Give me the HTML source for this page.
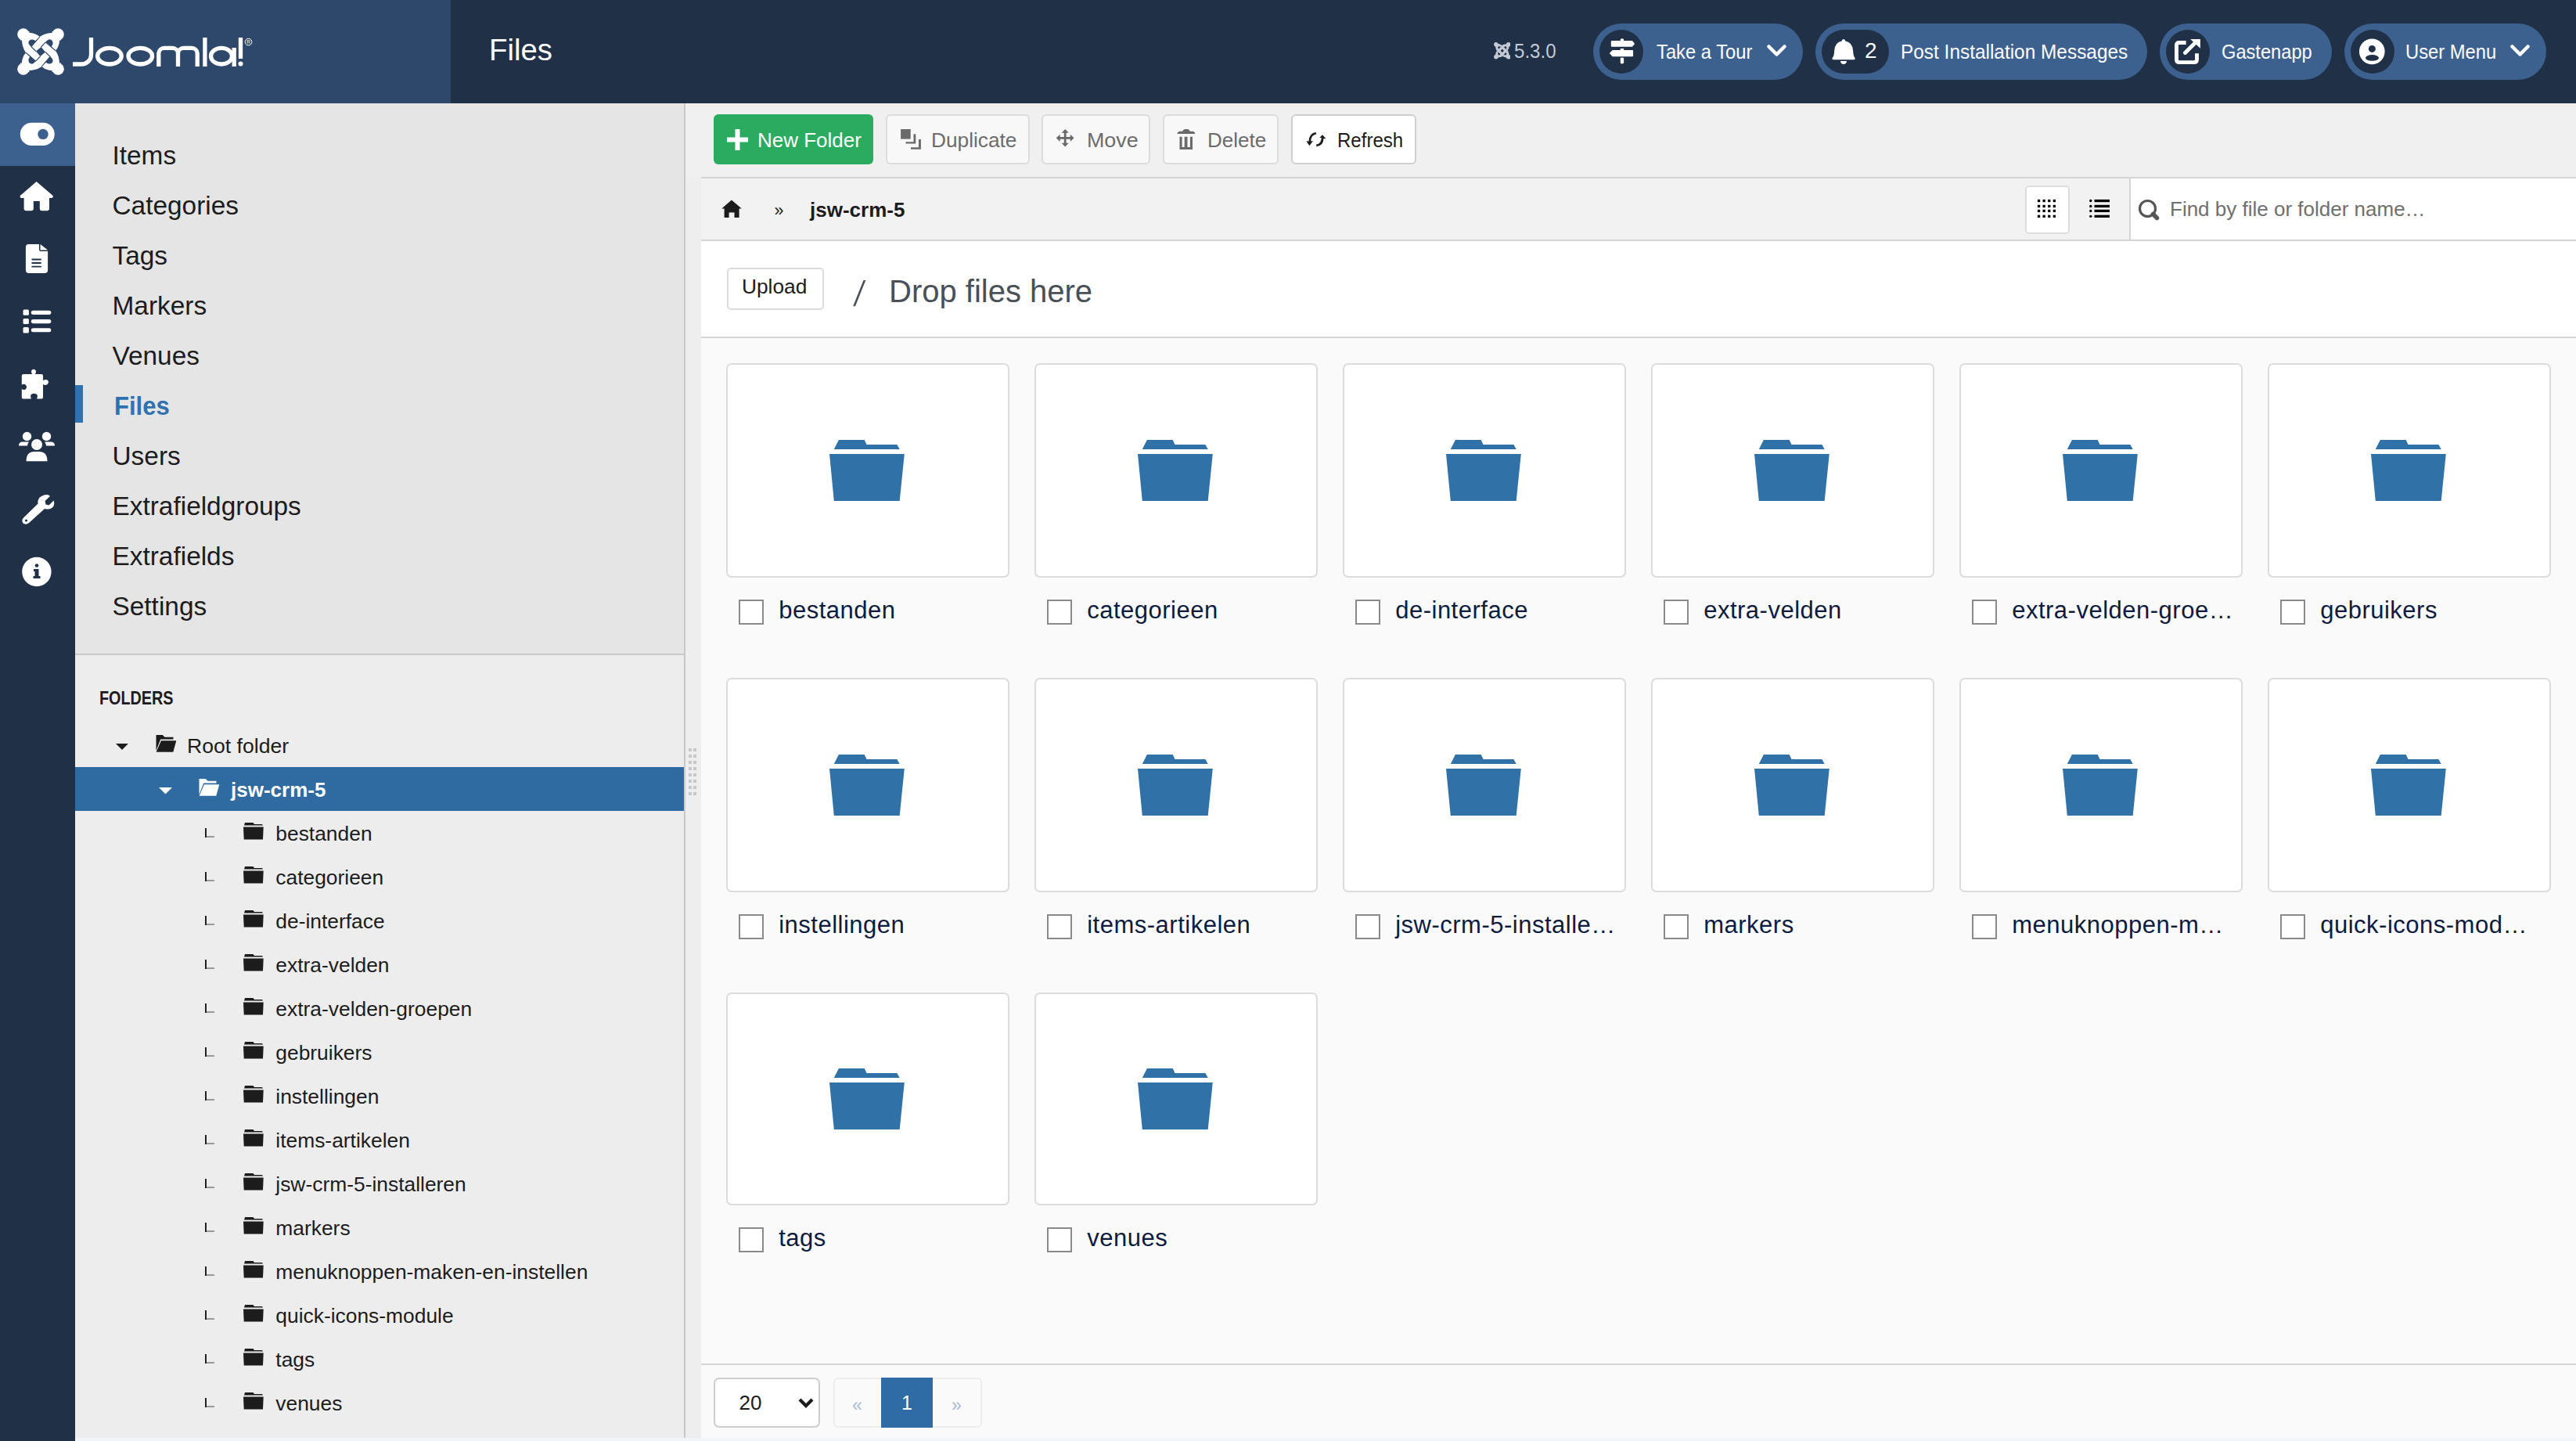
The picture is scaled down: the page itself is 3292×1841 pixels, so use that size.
<!DOCTYPE html><html><head><meta charset="utf-8"><style>
html,body{margin:0;padding:0;width:3292px;height:1841px;overflow:hidden;background:#f0f4fb;font-family:"Liberation Sans", sans-serif;}
.t{position:absolute;white-space:nowrap;}
.b{position:absolute;box-sizing:border-box;}
</style></head><body>
<div class="b" style="left:0.0px;top:0.0px;width:3292.0px;height:132.0px;background:#1f3047"></div>
<div class="b" style="left:0.0px;top:0.0px;width:576.0px;height:132.0px;background:#2e486b"></div>
<div class="b" style="left:0.0px;top:132.0px;width:96.0px;height:1709.0px;background:#1f3047"></div>
<div class="b" style="left:0.0px;top:132.0px;width:96.0px;height:80.0px;background:#3d618f"></div>
<div class="b" style="left:96.0px;top:132.0px;width:778.0px;height:703.0px;background:#e5e5e5"></div>
<div class="b" style="left:96.0px;top:835.0px;width:778.0px;height:2.0px;background:#c8c8c8"></div>
<div class="b" style="left:96.0px;top:837.0px;width:778.0px;height:1000.0px;background:#ededed"></div>
<div class="b" style="left:874.0px;top:132.0px;width:2.0px;height:1705.0px;background:#c8c8c8"></div>
<div class="b" style="left:876.0px;top:132.0px;width:2416.0px;height:1705.0px;background:#eeeeee"></div>
<div class="b" style="left:876.0px;top:132.0px;width:2416.0px;height:94.0px;background:#f0f0f0"></div>
<div class="b" style="left:896.0px;top:226.0px;width:2396.0px;height:82.0px;background:#f2f2f2;border-top:2px solid #d4d4d4;border-bottom:2px solid #d4d4d4"></div>
<div class="b" style="left:896.0px;top:308.0px;width:2396.0px;height:124.0px;background:#fff;border-bottom:2px solid #d4d4d4"></div>
<div class="b" style="left:896.0px;top:432.0px;width:2396.0px;height:1405.0px;background:#fafafa"></div>
<div class="b" style="left:896.0px;top:1742.0px;width:2396.0px;height:2.0px;background:#d4d4d4"></div>
<div class="t" style="left:625.0px;top:45.4px;font-size:38.3px;line-height:38.3px;color:#fff;">Files</div>
<div class="b" style="left:2036.0px;top:30.0px;width:268.0px;height:72.0px;background:#3d618f;border-radius:36px"></div>
<div class="b" style="left:2320.0px;top:30.0px;width:424.0px;height:72.0px;background:#3d618f;border-radius:36px"></div>
<div class="b" style="left:2760.0px;top:30.0px;width:220.0px;height:72.0px;background:#3d618f;border-radius:36px"></div>
<div class="b" style="left:2996.0px;top:30.0px;width:258.0px;height:72.0px;background:#3d618f;border-radius:36px"></div>
<div class="b" style="left:2044.0px;top:38.0px;width:56.0px;height:56.0px;background:#1f3047;border-radius:28px"></div>
<div class="b" style="left:2328.0px;top:38.0px;width:86.0px;height:56.0px;background:#1f3047;border-radius:28px"></div>
<div class="b" style="left:2768.0px;top:38.0px;width:56.0px;height:56.0px;background:#1f3047;border-radius:28px"></div>
<div class="b" style="left:3004.0px;top:38.0px;width:56.0px;height:56.0px;background:#1f3047;border-radius:28px"></div>
<div class="t" style="left:2117.0px;top:53.5px;font-size:25px;line-height:25px;color:#fff;transform:scaleX(0.95);transform-origin:0 0;">Take a Tour</div>
<div class="t" style="left:2429.0px;top:53.5px;font-size:25px;line-height:25px;color:#fff;transform:scaleX(0.976);transform-origin:0 0;">Post Installation Messages</div>
<div class="t" style="left:2839.0px;top:53.5px;font-size:25px;line-height:25px;color:#fff;transform:scaleX(0.946);transform-origin:0 0;">Gastenapp</div>
<div class="t" style="left:3074.0px;top:53.5px;font-size:25px;line-height:25px;color:#fff;transform:scaleX(0.95);transform-origin:0 0;">User Menu</div>
<div class="t" style="left:2383.0px;top:50.5px;font-size:28px;line-height:28px;color:#fff;">2</div>
<div class="t" style="left:1935.0px;top:52.8px;font-size:25px;line-height:25px;color:#c4cad3;transform:scaleX(0.963);transform-origin:0 0;">5.3.0</div>
<div class="t" style="left:143.5px;top:181.6px;font-size:33.4px;line-height:33.4px;color:#1c1c1c;">Items</div>
<div class="t" style="left:143.5px;top:245.6px;font-size:33.4px;line-height:33.4px;color:#1c1c1c;">Categories</div>
<div class="t" style="left:143.5px;top:309.6px;font-size:33.4px;line-height:33.4px;color:#1c1c1c;">Tags</div>
<div class="t" style="left:143.5px;top:373.6px;font-size:33.4px;line-height:33.4px;color:#1c1c1c;">Markers</div>
<div class="t" style="left:143.5px;top:437.6px;font-size:33.4px;line-height:33.4px;color:#1c1c1c;">Venues</div>
<div class="t" style="left:145.5px;top:501.9px;font-size:33px;line-height:33px;color:#3071b0;font-weight:bold;transform:scaleX(0.94);transform-origin:0 0;">Files</div>
<div class="t" style="left:143.5px;top:565.6px;font-size:33.4px;line-height:33.4px;color:#1c1c1c;">Users</div>
<div class="t" style="left:143.5px;top:629.6px;font-size:33.4px;line-height:33.4px;color:#1c1c1c;">Extrafieldgroups</div>
<div class="t" style="left:143.5px;top:693.6px;font-size:33.4px;line-height:33.4px;color:#1c1c1c;">Extrafields</div>
<div class="t" style="left:143.5px;top:757.6px;font-size:33.4px;line-height:33.4px;color:#1c1c1c;">Settings</div>
<div class="b" style="left:96.0px;top:492.0px;width:10.0px;height:48.0px;background:#3071b0"></div>
<div class="t" style="left:127.0px;top:881.0px;font-size:23px;line-height:23px;color:#1c1c1c;font-weight:bold;transform:scaleX(0.86);transform-origin:0 0;">FOLDERS</div>
<div class="t" style="left:239.0px;top:940.4px;font-size:26.6px;line-height:26.6px;color:#1c1c1c;">Root folder</div>
<div class="b" style="left:96.0px;top:980.0px;width:778.0px;height:56.0px;background:#2f6ba0"></div>
<div class="t" style="left:295.0px;top:996.4px;font-size:26px;line-height:26px;color:#fff;font-weight:bold;">jsw-crm-5</div>
<div class="t" style="left:352.3px;top:1051.6px;font-size:26.4px;line-height:26.4px;color:#1c1c1c;">bestanden</div>
<div class="t" style="left:352.3px;top:1107.6px;font-size:26.4px;line-height:26.4px;color:#1c1c1c;">categorieen</div>
<div class="t" style="left:352.3px;top:1163.6px;font-size:26.4px;line-height:26.4px;color:#1c1c1c;">de-interface</div>
<div class="t" style="left:352.3px;top:1219.6px;font-size:26.4px;line-height:26.4px;color:#1c1c1c;">extra-velden</div>
<div class="t" style="left:352.3px;top:1275.6px;font-size:26.4px;line-height:26.4px;color:#1c1c1c;">extra-velden-groepen</div>
<div class="t" style="left:352.3px;top:1331.6px;font-size:26.4px;line-height:26.4px;color:#1c1c1c;">gebruikers</div>
<div class="t" style="left:352.3px;top:1387.6px;font-size:26.4px;line-height:26.4px;color:#1c1c1c;">instellingen</div>
<div class="t" style="left:352.3px;top:1443.6px;font-size:26.4px;line-height:26.4px;color:#1c1c1c;">items-artikelen</div>
<div class="t" style="left:352.3px;top:1499.6px;font-size:26.4px;line-height:26.4px;color:#1c1c1c;">jsw-crm-5-installeren</div>
<div class="t" style="left:352.3px;top:1555.6px;font-size:26.4px;line-height:26.4px;color:#1c1c1c;">markers</div>
<div class="t" style="left:352.3px;top:1611.6px;font-size:26.4px;line-height:26.4px;color:#1c1c1c;">menuknoppen-maken-en-instellen</div>
<div class="t" style="left:352.3px;top:1667.6px;font-size:26.4px;line-height:26.4px;color:#1c1c1c;">quick-icons-module</div>
<div class="t" style="left:352.3px;top:1723.6px;font-size:26.4px;line-height:26.4px;color:#1c1c1c;">tags</div>
<div class="t" style="left:352.3px;top:1779.6px;font-size:26.4px;line-height:26.4px;color:#1c1c1c;">venues</div>
<div class="b" style="left:912.0px;top:146.0px;width:204.0px;height:64.0px;background:#2bab60;border-radius:6px"></div>
<div class="t" style="left:968.0px;top:165.9px;font-size:26px;line-height:26px;color:#fff;">New Folder</div>
<div class="b" style="left:1132.0px;top:146.0px;width:184.0px;height:64.0px;background:#f8f8f8;border:2px solid #dcdcdc;border-radius:6px"></div>
<div class="b" style="left:1331.0px;top:146.0px;width:139.0px;height:64.0px;background:#f8f8f8;border:2px solid #dcdcdc;border-radius:6px"></div>
<div class="b" style="left:1486.0px;top:146.0px;width:148.0px;height:64.0px;background:#f8f8f8;border:2px solid #dcdcdc;border-radius:6px"></div>
<div class="b" style="left:1650.0px;top:146.0px;width:160.0px;height:64.0px;background:#fff;border:2px solid #cfcfcf;border-radius:6px"></div>
<div class="t" style="left:1190.0px;top:165.9px;font-size:26px;line-height:26px;color:#6c6c6c;transform:scaleX(1.01);transform-origin:0 0;">Duplicate</div>
<div class="t" style="left:1389.0px;top:165.9px;font-size:26px;line-height:26px;color:#6c6c6c;transform:scaleX(1.033);transform-origin:0 0;">Move</div>
<div class="t" style="left:1543.0px;top:165.9px;font-size:26px;line-height:26px;color:#6c6c6c;">Delete</div>
<div class="t" style="left:1709.0px;top:165.9px;font-size:26px;line-height:26px;color:#1c1c1c;transform:scaleX(0.925);transform-origin:0 0;">Refresh</div>
<div class="t" style="left:989.5px;top:258.5px;font-size:21.5px;line-height:21.5px;color:#1c1c1c;">»</div>
<div class="t" style="left:1035.0px;top:255.4px;font-size:26px;line-height:26px;color:#1c1c1c;font-weight:bold;">jsw-crm-5</div>
<div class="b" style="left:2588.0px;top:237.0px;width:57.0px;height:62.0px;background:#fff;border:2px solid #dcdcdc;border-radius:5px"></div>
<div class="b" style="left:2721.0px;top:228.0px;width:571.0px;height:78.0px;background:#fff;border-left:2px solid #d4d4d4"></div>
<div class="t" style="left:2773.0px;top:253.9px;font-size:26px;line-height:26px;color:#6f6f6f;">Find by file or folder name…</div>
<div class="b" style="left:929.0px;top:342.0px;width:124.0px;height:54.0px;background:#fff;border:2px solid #dcdcdc;border-radius:5px"></div>
<div class="t" style="left:948.0px;top:353.1px;font-size:26.3px;line-height:26.3px;color:#1c1c1c;">Upload</div>
<svg class="b" style="left:1088.0px;top:356.0px;" width="20" height="37" viewBox="1088 356 20 37"><path d="M1103.5 358 L1106.3 358 L1093 391.3 L1090.2 391.3Z" fill="#495057"/></svg>
<div class="t" style="left:1136.0px;top:352.0px;font-size:40px;line-height:40px;color:#495057;">Drop files here</div>
<div class="b" style="left:928.1px;top:464.2px;width:362.0px;height:273.6px;background:#fff;border:2px solid #dcdcdc;border-radius:7px"></div>
<svg class="b" style="left:1060.0px;top:561.6px;" width="96" height="78" viewBox="0 0 96 78"><path d="M11.9 0H44.7L47.5 6.1H86.4L89.7 11.9H5.8Z M0 18H95.8L89.7 78H5.8Z" fill="#3071a8"/></svg>
<div class="b" style="left:944.2px;top:766.2px;width:31.6px;height:31.6px;background:#fff;border:2px solid #8a8a8a"></div>
<div class="t" style="left:995.2px;top:763.5px;font-size:31px;line-height:31px;color:#0d1b3e;letter-spacing:0.5px;">bestanden</div>
<div class="b" style="left:1322.1px;top:464.2px;width:362.0px;height:273.6px;background:#fff;border:2px solid #dcdcdc;border-radius:7px"></div>
<svg class="b" style="left:1454.0px;top:561.6px;" width="96" height="78" viewBox="0 0 96 78"><path d="M11.9 0H44.7L47.5 6.1H86.4L89.7 11.9H5.8Z M0 18H95.8L89.7 78H5.8Z" fill="#3071a8"/></svg>
<div class="b" style="left:1338.2px;top:766.2px;width:31.6px;height:31.6px;background:#fff;border:2px solid #8a8a8a"></div>
<div class="t" style="left:1389.2px;top:763.5px;font-size:31px;line-height:31px;color:#0d1b3e;letter-spacing:0.5px;">categorieen</div>
<div class="b" style="left:1716.1px;top:464.2px;width:362.0px;height:273.6px;background:#fff;border:2px solid #dcdcdc;border-radius:7px"></div>
<svg class="b" style="left:1848.0px;top:561.6px;" width="96" height="78" viewBox="0 0 96 78"><path d="M11.9 0H44.7L47.5 6.1H86.4L89.7 11.9H5.8Z M0 18H95.8L89.7 78H5.8Z" fill="#3071a8"/></svg>
<div class="b" style="left:1732.2px;top:766.2px;width:31.6px;height:31.6px;background:#fff;border:2px solid #8a8a8a"></div>
<div class="t" style="left:1783.2px;top:763.5px;font-size:31px;line-height:31px;color:#0d1b3e;letter-spacing:0.5px;">de-interface</div>
<div class="b" style="left:2110.1px;top:464.2px;width:362.0px;height:273.6px;background:#fff;border:2px solid #dcdcdc;border-radius:7px"></div>
<svg class="b" style="left:2242.0px;top:561.6px;" width="96" height="78" viewBox="0 0 96 78"><path d="M11.9 0H44.7L47.5 6.1H86.4L89.7 11.9H5.8Z M0 18H95.8L89.7 78H5.8Z" fill="#3071a8"/></svg>
<div class="b" style="left:2126.2px;top:766.2px;width:31.6px;height:31.6px;background:#fff;border:2px solid #8a8a8a"></div>
<div class="t" style="left:2177.2px;top:763.5px;font-size:31px;line-height:31px;color:#0d1b3e;letter-spacing:0.5px;">extra-velden</div>
<div class="b" style="left:2504.1px;top:464.2px;width:362.0px;height:273.6px;background:#fff;border:2px solid #dcdcdc;border-radius:7px"></div>
<svg class="b" style="left:2636.0px;top:561.6px;" width="96" height="78" viewBox="0 0 96 78"><path d="M11.9 0H44.7L47.5 6.1H86.4L89.7 11.9H5.8Z M0 18H95.8L89.7 78H5.8Z" fill="#3071a8"/></svg>
<div class="b" style="left:2520.2px;top:766.2px;width:31.6px;height:31.6px;background:#fff;border:2px solid #8a8a8a"></div>
<div class="t" style="left:2571.2px;top:763.5px;font-size:31px;line-height:31px;color:#0d1b3e;letter-spacing:0.5px;">extra-velden-groe…</div>
<div class="b" style="left:2898.1px;top:464.2px;width:362.0px;height:273.6px;background:#fff;border:2px solid #dcdcdc;border-radius:7px"></div>
<svg class="b" style="left:3030.0px;top:561.6px;" width="96" height="78" viewBox="0 0 96 78"><path d="M11.9 0H44.7L47.5 6.1H86.4L89.7 11.9H5.8Z M0 18H95.8L89.7 78H5.8Z" fill="#3071a8"/></svg>
<div class="b" style="left:2914.2px;top:766.2px;width:31.6px;height:31.6px;background:#fff;border:2px solid #8a8a8a"></div>
<div class="t" style="left:2965.2px;top:763.5px;font-size:31px;line-height:31px;color:#0d1b3e;letter-spacing:0.5px;">gebruikers</div>
<div class="b" style="left:928.1px;top:865.9px;width:362.0px;height:274.0px;background:#fff;border:2px solid #dcdcdc;border-radius:7px"></div>
<svg class="b" style="left:1060.0px;top:963.5px;" width="96" height="78" viewBox="0 0 96 78"><path d="M11.9 0H44.7L47.5 6.1H86.4L89.7 11.9H5.8Z M0 18H95.8L89.7 78H5.8Z" fill="#3071a8"/></svg>
<div class="b" style="left:944.2px;top:1168.1px;width:31.6px;height:31.6px;background:#fff;border:2px solid #8a8a8a"></div>
<div class="t" style="left:995.2px;top:1165.6px;font-size:31px;line-height:31px;color:#0d1b3e;letter-spacing:0.5px;">instellingen</div>
<div class="b" style="left:1322.1px;top:865.9px;width:362.0px;height:274.0px;background:#fff;border:2px solid #dcdcdc;border-radius:7px"></div>
<svg class="b" style="left:1454.0px;top:963.5px;" width="96" height="78" viewBox="0 0 96 78"><path d="M11.9 0H44.7L47.5 6.1H86.4L89.7 11.9H5.8Z M0 18H95.8L89.7 78H5.8Z" fill="#3071a8"/></svg>
<div class="b" style="left:1338.2px;top:1168.1px;width:31.6px;height:31.6px;background:#fff;border:2px solid #8a8a8a"></div>
<div class="t" style="left:1389.2px;top:1165.6px;font-size:31px;line-height:31px;color:#0d1b3e;letter-spacing:0.5px;">items-artikelen</div>
<div class="b" style="left:1716.1px;top:865.9px;width:362.0px;height:274.0px;background:#fff;border:2px solid #dcdcdc;border-radius:7px"></div>
<svg class="b" style="left:1848.0px;top:963.5px;" width="96" height="78" viewBox="0 0 96 78"><path d="M11.9 0H44.7L47.5 6.1H86.4L89.7 11.9H5.8Z M0 18H95.8L89.7 78H5.8Z" fill="#3071a8"/></svg>
<div class="b" style="left:1732.2px;top:1168.1px;width:31.6px;height:31.6px;background:#fff;border:2px solid #8a8a8a"></div>
<div class="t" style="left:1783.2px;top:1165.6px;font-size:31px;line-height:31px;color:#0d1b3e;letter-spacing:0.5px;">jsw-crm-5-installe…</div>
<div class="b" style="left:2110.1px;top:865.9px;width:362.0px;height:274.0px;background:#fff;border:2px solid #dcdcdc;border-radius:7px"></div>
<svg class="b" style="left:2242.0px;top:963.5px;" width="96" height="78" viewBox="0 0 96 78"><path d="M11.9 0H44.7L47.5 6.1H86.4L89.7 11.9H5.8Z M0 18H95.8L89.7 78H5.8Z" fill="#3071a8"/></svg>
<div class="b" style="left:2126.2px;top:1168.1px;width:31.6px;height:31.6px;background:#fff;border:2px solid #8a8a8a"></div>
<div class="t" style="left:2177.2px;top:1165.6px;font-size:31px;line-height:31px;color:#0d1b3e;letter-spacing:0.5px;">markers</div>
<div class="b" style="left:2504.1px;top:865.9px;width:362.0px;height:274.0px;background:#fff;border:2px solid #dcdcdc;border-radius:7px"></div>
<svg class="b" style="left:2636.0px;top:963.5px;" width="96" height="78" viewBox="0 0 96 78"><path d="M11.9 0H44.7L47.5 6.1H86.4L89.7 11.9H5.8Z M0 18H95.8L89.7 78H5.8Z" fill="#3071a8"/></svg>
<div class="b" style="left:2520.2px;top:1168.1px;width:31.6px;height:31.6px;background:#fff;border:2px solid #8a8a8a"></div>
<div class="t" style="left:2571.2px;top:1165.6px;font-size:31px;line-height:31px;color:#0d1b3e;letter-spacing:0.5px;">menuknoppen-m…</div>
<div class="b" style="left:2898.1px;top:865.9px;width:362.0px;height:274.0px;background:#fff;border:2px solid #dcdcdc;border-radius:7px"></div>
<svg class="b" style="left:3030.0px;top:963.5px;" width="96" height="78" viewBox="0 0 96 78"><path d="M11.9 0H44.7L47.5 6.1H86.4L89.7 11.9H5.8Z M0 18H95.8L89.7 78H5.8Z" fill="#3071a8"/></svg>
<div class="b" style="left:2914.2px;top:1168.1px;width:31.6px;height:31.6px;background:#fff;border:2px solid #8a8a8a"></div>
<div class="t" style="left:2965.2px;top:1165.6px;font-size:31px;line-height:31px;color:#0d1b3e;letter-spacing:0.5px;">quick-icons-mod…</div>
<div class="b" style="left:928.1px;top:1268.3px;width:362.0px;height:271.6px;background:#fff;border:2px solid #dcdcdc;border-radius:7px"></div>
<svg class="b" style="left:1060.0px;top:1364.7px;" width="96" height="78" viewBox="0 0 96 78"><path d="M11.9 0H44.7L47.5 6.1H86.4L89.7 11.9H5.8Z M0 18H95.8L89.7 78H5.8Z" fill="#3071a8"/></svg>
<div class="b" style="left:944.2px;top:1568.1px;width:31.6px;height:31.6px;background:#fff;border:2px solid #8a8a8a"></div>
<div class="t" style="left:995.2px;top:1565.6px;font-size:31px;line-height:31px;color:#0d1b3e;letter-spacing:0.5px;">tags</div>
<div class="b" style="left:1322.1px;top:1268.3px;width:362.0px;height:271.6px;background:#fff;border:2px solid #dcdcdc;border-radius:7px"></div>
<svg class="b" style="left:1454.0px;top:1364.7px;" width="96" height="78" viewBox="0 0 96 78"><path d="M11.9 0H44.7L47.5 6.1H86.4L89.7 11.9H5.8Z M0 18H95.8L89.7 78H5.8Z" fill="#3071a8"/></svg>
<div class="b" style="left:1338.2px;top:1568.1px;width:31.6px;height:31.6px;background:#fff;border:2px solid #8a8a8a"></div>
<div class="t" style="left:1389.2px;top:1565.6px;font-size:31px;line-height:31px;color:#0d1b3e;letter-spacing:0.5px;">venues</div>
<div class="b" style="left:912.0px;top:1760.0px;width:136.0px;height:64.0px;background:#fff;border:2px solid #cfcfcf;border-radius:7px"></div>
<div class="t" style="left:944.5px;top:1779.4px;font-size:26px;line-height:26px;color:#1c1c1c;">20</div>
<div class="b" style="left:1065.0px;top:1760.0px;width:190.0px;height:64.0px;background:#fafafa;border:2px solid #ececec;border-radius:6px"></div>
<div class="b" style="left:1126.0px;top:1760.0px;width:66.0px;height:64.0px;background:#2f6ca5"></div>
<div class="t" style="left:1152.0px;top:1780.2px;font-size:25px;line-height:25px;color:#fff;">1</div>
<div class="t" style="left:1089.0px;top:1783.5px;font-size:23px;line-height:23px;color:#a9bbd0;">«</div>
<div class="t" style="left:1216.0px;top:1783.5px;font-size:23px;line-height:23px;color:#a9bbd0;">»</div>
<svg class="b" style="left:22.0px;top:36.0px;" width="60" height="60" viewBox="0 0 60 60">
<g fill="#fff">
<circle cx="7.8" cy="7.8" r="7.6"/><circle cx="52.2" cy="7.8" r="7.6"/><circle cx="7.8" cy="52.2" r="7.6"/><circle cx="52.2" cy="52.2" r="7.6"/>
<rect x="4" y="4" width="52" height="52" rx="6"/>
</g>
<g fill="#2e486b"><g transform="rotate(0 30 30)"><path d="M15.4 -2 L15.4 5.8 Q20 6 25 8.3 L28.75 11 Q33 8 37.5 7 Q41 6.2 44.6 6 L44.6 -2Z"/>
<path d="M28.75 11 L18 23.75 Q14 20.5 14.4 18 Q15 14.5 19.5 14.4 Q21.5 14.5 23.2 16.2Z"/></g><g transform="rotate(90 30 30)"><path d="M15.4 -2 L15.4 5.8 Q20 6 25 8.3 L28.75 11 Q33 8 37.5 7 Q41 6.2 44.6 6 L44.6 -2Z"/>
<path d="M28.75 11 L18 23.75 Q14 20.5 14.4 18 Q15 14.5 19.5 14.4 Q21.5 14.5 23.2 16.2Z"/></g><g transform="rotate(180 30 30)"><path d="M15.4 -2 L15.4 5.8 Q20 6 25 8.3 L28.75 11 Q33 8 37.5 7 Q41 6.2 44.6 6 L44.6 -2Z"/>
<path d="M28.75 11 L18 23.75 Q14 20.5 14.4 18 Q15 14.5 19.5 14.4 Q21.5 14.5 23.2 16.2Z"/></g><g transform="rotate(270 30 30)"><path d="M15.4 -2 L15.4 5.8 Q20 6 25 8.3 L28.75 11 Q33 8 37.5 7 Q41 6.2 44.6 6 L44.6 -2Z"/>
<path d="M28.75 11 L18 23.75 Q14 20.5 14.4 18 Q15 14.5 19.5 14.4 Q21.5 14.5 23.2 16.2Z"/></g>
<path d="M30.5 24 L36 30.5 L29.5 36 L24 29.5Z"/>
</g>
<g fill="none" stroke="#2e486b" stroke-width="1.1"><g transform="rotate(0 30 30)"><path d="M28.75 11 L17.9 23.75 L24 29.5"/></g><g transform="rotate(90 30 30)"><path d="M28.75 11 L17.9 23.75 L24 29.5"/></g><g transform="rotate(180 30 30)"><path d="M28.75 11 L17.9 23.75 L24 29.5"/></g><g transform="rotate(270 30 30)"><path d="M28.75 11 L17.9 23.75 L24 29.5"/></g></g></svg>
<svg class="b" style="left:1908.6px;top:54.2px;" width="21.6" height="21.6" viewBox="0 0 60 60">
<g fill="#c4cad3">
<circle cx="7.8" cy="7.8" r="7.6"/><circle cx="52.2" cy="7.8" r="7.6"/><circle cx="7.8" cy="52.2" r="7.6"/><circle cx="52.2" cy="52.2" r="7.6"/>
<rect x="4" y="4" width="52" height="52" rx="6"/>
</g>
<g fill="#1f3047"><g transform="rotate(0 30 30)"><path d="M15.4 -2 L15.4 5.8 Q20 6 25 8.3 L28.75 11 Q33 8 37.5 7 Q41 6.2 44.6 6 L44.6 -2Z"/>
<path d="M28.75 11 L18 23.75 Q14 20.5 14.4 18 Q15 14.5 19.5 14.4 Q21.5 14.5 23.2 16.2Z"/></g><g transform="rotate(90 30 30)"><path d="M15.4 -2 L15.4 5.8 Q20 6 25 8.3 L28.75 11 Q33 8 37.5 7 Q41 6.2 44.6 6 L44.6 -2Z"/>
<path d="M28.75 11 L18 23.75 Q14 20.5 14.4 18 Q15 14.5 19.5 14.4 Q21.5 14.5 23.2 16.2Z"/></g><g transform="rotate(180 30 30)"><path d="M15.4 -2 L15.4 5.8 Q20 6 25 8.3 L28.75 11 Q33 8 37.5 7 Q41 6.2 44.6 6 L44.6 -2Z"/>
<path d="M28.75 11 L18 23.75 Q14 20.5 14.4 18 Q15 14.5 19.5 14.4 Q21.5 14.5 23.2 16.2Z"/></g><g transform="rotate(270 30 30)"><path d="M15.4 -2 L15.4 5.8 Q20 6 25 8.3 L28.75 11 Q33 8 37.5 7 Q41 6.2 44.6 6 L44.6 -2Z"/>
<path d="M28.75 11 L18 23.75 Q14 20.5 14.4 18 Q15 14.5 19.5 14.4 Q21.5 14.5 23.2 16.2Z"/></g>
<path d="M30.5 24 L36 30.5 L29.5 36 L24 29.5Z"/>
</g>
<g fill="none" stroke="#1f3047" stroke-width="0.01"><g transform="rotate(0 30 30)"><path d="M28.75 11 L17.9 23.75 L24 29.5"/></g><g transform="rotate(90 30 30)"><path d="M28.75 11 L17.9 23.75 L24 29.5"/></g><g transform="rotate(180 30 30)"><path d="M28.75 11 L17.9 23.75 L24 29.5"/></g><g transform="rotate(270 30 30)"><path d="M28.75 11 L17.9 23.75 L24 29.5"/></g></g></svg>
<svg class="b" style="left:90.0px;top:44.0px;" width="236" height="46" viewBox="90 44 236 46">
<g stroke="#fff" stroke-width="5.3" fill="none">
<path d="M93 82 L104 82 A12.5 12 0 0 0 116.5 70 L116.5 48"/>
<ellipse cx="139.9" cy="71.7" rx="15.3" ry="10.3"/>
<ellipse cx="179.3" cy="71.7" rx="15.3" ry="10.3"/>
<path d="M202.8 85 L202.8 68 A7 7 0 0 1 209.8 61.4 L220.5 61.4 A7 7 0 0 1 227.5 68 L227.5 85 M227.5 68 A7 7 0 0 1 234.5 61.4 L245.2 61.4 A7 7 0 0 1 252.2 68 L252.2 85"/>
<path d="M261.9 48 L261.9 85"/>
<ellipse cx="283" cy="71.7" rx="13.5" ry="10.3"/>
<path d="M299.2 61 L299.2 85"/>
<path d="M307.5 48 L307.5 75"/>
</g>
<circle cx="307.5" cy="81.5" r="3" fill="#fff"/>
<circle cx="317.5" cy="53.6" r="4.3" stroke="#fff" stroke-width="1" fill="none"/>
<text x="317.5" y="56.3" font-size="6.5" fill="#fff" text-anchor="middle" font-family="Liberation Sans">R</text></svg>
<svg class="b" style="left:0.0px;top:132.0px;" width="96" height="1000" viewBox="0 132 96 1000">
<g fill="#fff">
<rect x="25.8" y="156.8" width="43.9" height="29.2" rx="14.6"/>
<path d="M46.6 232 L67.6 250 Q68.5 253 65.5 253 L63 253 L63 266.5 Q63 269.3 60 269.3 L53.5 269.3 Q50.8 269.3 50.8 266.5 L50.8 257 L42.8 257 L42.8 266.5 Q42.8 269.3 40 269.3 L33.5 269.3 Q30.6 269.3 30.6 266.5 L30.6 253 L28 253 Q25 253 25.8 250Z"/>
<path d="M36.5 312 L50 312 L50 319 Q50 321 52 321 L61.1 321 L61.1 345 Q61.1 349 57.1 349 L36.9 349 Q32.9 349 32.9 345 L32.9 316 Q32.9 312 36.5 312Z"/>
<path d="M51.5 312 L61.1 319.5 L51.5 319.5Z"/>
<rect x="29.5" y="395.6" width="7.4" height="7.2" rx="1.5"/><rect x="29.5" y="406.9" width="7.4" height="7" rx="1.5"/><rect x="29.5" y="417.9" width="7.4" height="7.5" rx="1.5"/>
<rect x="39.8" y="396.7" width="25.5" height="5.2" rx="2.6"/><rect x="39.8" y="408" width="25.5" height="5.2" rx="2.6"/><rect x="39.8" y="419.3" width="25.5" height="5" rx="2.5"/>
<path d="M33 478 L41 478 Q39 474 41 472.5 Q43 471 45 472.5 Q47 474 45 478 L53 478 Q55 478 55 480 L55 486 Q59 484 61 486 Q63 488 61 490.5 Q59 493 55 491 L55 507.5 Q55 509.6 53 509.6 L47 509.6 Q49 505 46.5 503.5 Q43 502 40.5 503.5 Q38 505 40 509.6 L30 509.6 Q27.8 509.6 27.8 507.5 L27.8 497 Q31 499 33 497 Q35 494.5 33 492 Q31 490 27.8 491.5 L27.8 480 Q27.8 478 30 478Z"/>
<circle cx="34.5" cy="557.5" r="5.7"/><circle cx="59.5" cy="557.5" r="5.7"/>
<path d="M24 569.5 Q24 564.5 29 564.5 L37 564.5 Q35 567 35 569.5Z"/><path d="M70 569.5 Q70 564.5 65 564.5 L57 564.5 Q59 567 59 569.5Z"/>
<circle cx="47" cy="568" r="7"/>
<path d="M33.5 589.3 Q33.5 577 44 577 L50 577 Q60.5 577 60.5 589.3Z"/>
<path d="M56 632.5 Q62 631 64 634 L57.5 640 L58.5 644.5 L62.5 645.5 L68.5 639.5 Q70 642 68.5 646.5 Q65 652 57 650 L37 668 Q33 671 29.5 668.5 Q27 665 30 661.5 L48.5 643.5 Q47 636 56 632.5Z"/>
<circle cx="46.9" cy="730.5" r="18.7"/>
</g>
<circle cx="55" cy="171.4" r="6.7" fill="#3d618f"/>
<rect x="40.3" y="330.5" width="12.6" height="1.9" rx="0.9" fill="#1f3047"/><rect x="40.3" y="335.1" width="12.6" height="1.9" rx="0.9" fill="#1f3047"/><rect x="40.3" y="339.7" width="12.6" height="1.9" rx="0.9" fill="#1f3047"/>
<circle cx="33.5" cy="665" r="1.6" fill="#1f3047"/>
<g fill="#1f3047"><circle cx="47" cy="722.5" r="2.3"/><path d="M43 727 L49.5 727 L49.5 736 L51.5 736 L51.5 739 L42.5 739 L42.5 736 L44.5 736 L44.5 730 L43 730Z"/></g>
</svg>
<svg class="b" style="left:2044.0px;top:38.0px;" width="56" height="56" viewBox="0 0 56 56"><g fill="#fff"><path d="M26.8 12 Q28.9 10.5 31.1 12 L31.1 14 L42 14 L45.1 17.9 L42 21.8 L16 21.8 Q14.8 21.8 14.8 20.6 L14.8 15.2 Q14.8 14 16 14 L26.8 14Z"/><path d="M26.8 24 L31.1 24 L31.1 26 L42 26 Q43.1 26 43.1 27.2 L43.1 33 Q43.1 34.2 42 34.2 L16.7 34.2 L12.8 30.1 L16.7 26 L26.8 26Z"/><path d="M26.8 35.8 L31.1 35.8 L31.1 42.5 Q28.9 44.5 26.8 42.5Z"/></g></svg>
<svg class="b" style="left:2328.0px;top:38.0px;" width="86" height="56" viewBox="0 0 86 56"><g fill="#fff"><path d="M27.9 12 Q30.3 12 30.3 14.5 Q39 16 40 26 L40.5 31 Q41 34 42.4 35.8 Q43.5 38.3 41 38.3 L15.2 38.3 Q12.6 38.3 13.8 35.8 Q15.4 34 15.8 31 L16.3 26 Q17.3 16 25.6 14.5 Q25.6 12 27.9 12Z"/><path d="M23.9 40 L32.1 40 Q31.5 44.1 28 44.1 Q24.5 44.1 23.9 40Z"/></g></svg>
<svg class="b" style="left:2768.0px;top:38.0px;" width="56" height="56" viewBox="0 0 56 56"><g fill="none" stroke="#fff" stroke-width="4.9"><path d="M25.6 16.5 L17 16.5 Q13.5 16.5 13.5 20 L13.5 38 Q13.5 41.6 17 41.6 L36 41.6 Q39.5 41.6 39.5 38 L39.5 30.3"/><path d="M24.5 29.5 L38.5 15.5" stroke-linecap="round"/></g><path d="M31.1 11.9 L43.9 11.9 L43.9 23.7Z" fill="#fff"/></svg>
<svg class="b" style="left:3004.0px;top:38.0px;" width="56" height="56" viewBox="0 0 56 56"><circle cx="27.3" cy="27.9" r="16.3" fill="#fff"/><circle cx="27.4" cy="24.4" r="4.5" fill="#1f3047"/><ellipse cx="27.5" cy="35.9" rx="8.5" ry="3.9" fill="#1f3047"/></svg>
<svg class="b" style="left:2257.5px;top:57.0px;" width="25" height="16" viewBox="0 0 25 16"><path d="M2.5 2.5 L12.5 12.5 L22.5 2.5" fill="none" stroke="#fff" stroke-width="4.5" stroke-linecap="round" stroke-linejoin="round"/></svg>
<svg class="b" style="left:3208.0px;top:57.0px;" width="25" height="16" viewBox="0 0 25 16"><path d="M2.5 2.5 L12.5 12.5 L22.5 2.5" fill="none" stroke="#fff" stroke-width="4.5" stroke-linecap="round" stroke-linejoin="round"/></svg>
<svg class="b" style="left:929.0px;top:165.0px;" width="27" height="27" viewBox="0 0 27 27"><path d="M10.5 0H16.5V10.5H27V16.5H16.5V27H10.5V16.5H0V10.5H10.5Z" fill="#fff"/></svg>
<svg class="b" style="left:1150.0px;top:164.0px;" width="28" height="28" viewBox="1150 164 28 28"><g fill="#6a6a6a"><rect x="1151.1" y="165" width="12.6" height="12.6"/><path d="M1167.5 171.2H1170.3V183.6H1157.5V181.2H1167.5Z"/><path d="M1174 178.1H1176.9V190.8H1164V188.3H1174Z"/></g></svg>
<svg class="b" style="left:1349.0px;top:164.0px;" width="25" height="25" viewBox="0 0 25 25"><g fill="#6a6a6a"><path d="M12.2 1 L16.8 5.7 L13.6 5.7 L13.6 10.9 L18.8 10.9 L18.8 7.7 L23.5 12.3 L18.8 16.9 L18.8 13.7 L13.6 13.7 L13.6 18.8 L16.8 18.8 L12.2 23.5 L7.6 18.8 L10.8 18.8 L10.8 13.7 L5.6 13.7 L5.6 16.9 L0.8 12.3 L5.6 7.7 L5.6 10.9 L10.8 10.9 L10.8 5.7 L7.6 5.7Z"/></g></svg>
<svg class="b" style="left:1503.0px;top:164.0px;" width="26" height="28" viewBox="1503 164 26 28"><g fill="#6a6a6a"><path d="M1504.4 170.9 Q1505 168 1508 167.8 L1511.2 167.8 Q1512 165 1515 165 L1517.6 165 Q1520 165 1520.6 167.8 L1524 167.8 Q1527 168 1527.2 170.9Z"/><path d="M1507.5 174.7H1510.6V188.1H1513.7V174.7H1517.5V188.1H1520.9V174.7H1524V190.9H1507.5Z"/></g></svg>
<svg class="b" style="left:1668.0px;top:168.0px;" width="28" height="22" viewBox="1668 168 28 22"><g fill="#1c1c1c"><path d="M1681.9 169 L1681.9 171.6 Q1675.5 172.5 1675.2 180.5 L1678 180 L1673.4 186.2 L1669.4 180.3 L1672.5 180.5 Q1672.8 170 1681.9 169Z"/><path d="M1682.2 187.2 L1682.2 184.6 Q1688.5 183.7 1688.8 175.7 L1686 176.2 L1690 172.2 L1694.4 177.1 L1691.5 176.9 Q1691.2 186.5 1682.2 187.2Z"/></g></svg>
<svg class="b" style="left:921.0px;top:254.0px;" width="28" height="26" viewBox="921 254 28 26"><path d="M934.9 255.5 L947.8 266.5 L944.6 266.5 L944.6 278 L938.5 278 L938.5 271.5 L931.6 271.5 L931.6 278 L925.6 278 L925.6 266.5 L922.3 266.5Z" fill="#1c1c1c"/></svg>
<svg class="b" style="left:2600.0px;top:252.0px;" width="30" height="30" viewBox="2600 252 30 30"><g fill="#000"><rect x="2603.9" y="254.9" width="3.3" height="3.3"/><rect x="2610.5" y="254.9" width="3.3" height="3.3"/><rect x="2617.1" y="254.9" width="3.3" height="3.3"/><rect x="2623.7" y="254.9" width="3.3" height="3.3"/><rect x="2603.9" y="261.8" width="3.3" height="3.3"/><rect x="2610.5" y="261.8" width="3.3" height="3.3"/><rect x="2617.1" y="261.8" width="3.3" height="3.3"/><rect x="2623.7" y="261.8" width="3.3" height="3.3"/><rect x="2603.9" y="267.8" width="3.3" height="3.3"/><rect x="2610.5" y="267.8" width="3.3" height="3.3"/><rect x="2617.1" y="267.8" width="3.3" height="3.3"/><rect x="2623.7" y="267.8" width="3.3" height="3.3"/><rect x="2603.9" y="274.7" width="3.3" height="3.3"/><rect x="2610.5" y="274.7" width="3.3" height="3.3"/><rect x="2617.1" y="274.7" width="3.3" height="3.3"/><rect x="2623.7" y="274.7" width="3.3" height="3.3"/></g></svg>
<svg class="b" style="left:2668.0px;top:252.0px;" width="30" height="30" viewBox="2668 252 30 30"><g fill="#000"><circle cx="2671.8" cy="256.55" r="1.7"/><rect x="2676.5" y="254.9" width="19.5" height="3.3"/><circle cx="2671.8" cy="263.45" r="1.7"/><rect x="2676.5" y="261.8" width="19.5" height="3.3"/><circle cx="2671.8" cy="269.45" r="1.7"/><rect x="2676.5" y="267.8" width="19.5" height="3.3"/><circle cx="2671.8" cy="276.34999999999997" r="1.7"/><rect x="2676.5" y="274.7" width="19.5" height="3.3"/></g></svg>
<svg class="b" style="left:2730.0px;top:252.0px;" width="32" height="32" viewBox="2730 252 32 32"><circle cx="2744.5" cy="266.5" r="10" fill="none" stroke="#555" stroke-width="3.2"/><path d="M2751.5 273.5 L2756.5 278.5" stroke="#555" stroke-width="5.5" stroke-linecap="round"/></svg>
<svg class="b" style="left:146.0px;top:948.0px;" width="20" height="12" viewBox="146 948 20 12"><path d="M148 950 L163.9 950 L156 957.9Z" fill="#1c1c1c"/></svg>
<svg class="b" style="left:201.0px;top:1003.0px;" width="22" height="14" viewBox="201 1003 22 14"><path d="M203 1006 L220 1006 L211.5 1014.5Z" fill="#fff"/></svg>
<svg class="b" style="left:198.5px;top:938.5px;" width="27" height="22" viewBox="0 0 27 22"><g fill="#1c1c1c"><path d="M0.5 0 L8.8 0 L11.5 2.8 L22.5 2.8 L22.5 5.6 L6.2 5.6 L0.5 20 Z M7 7.2 L26.3 7.2 L22.3 21.7 L0.6 21.7Z"/></g></svg>
<svg class="b" style="left:254.0px;top:995.0px;" width="27" height="22" viewBox="0 0 27 22"><g fill="#fff"><path d="M0.5 0 L8.8 0 L11.5 2.8 L22.5 2.8 L22.5 5.6 L6.2 5.6 L0.5 20 Z M7 7.2 L26.3 7.2 L22.3 21.7 L0.6 21.7Z"/></g></svg>
<div class="b" style="left:262.0px;top:1058.0px;width:2.0px;height:12.0px;background:#222"></div>
<div class="b" style="left:264.0px;top:1068.0px;width:10.0px;height:1.7px;background:#9a9a9a"></div>
<svg class="b" style="left:311.0px;top:1051.0px;" width="26" height="22" viewBox="0 0 26 22"><g fill="#1c1c1c"><path d="M2 0 L12.5 0 L14 2.1 L24 2.1 L25 3.5 L1 3.5 Z M0 5.5 L25.7 5.5 L25 21.5 L0.7 21.5Z"/></g></svg>
<div class="b" style="left:262.0px;top:1114.0px;width:2.0px;height:12.0px;background:#222"></div>
<div class="b" style="left:264.0px;top:1124.0px;width:10.0px;height:1.7px;background:#9a9a9a"></div>
<svg class="b" style="left:311.0px;top:1107.0px;" width="26" height="22" viewBox="0 0 26 22"><g fill="#1c1c1c"><path d="M2 0 L12.5 0 L14 2.1 L24 2.1 L25 3.5 L1 3.5 Z M0 5.5 L25.7 5.5 L25 21.5 L0.7 21.5Z"/></g></svg>
<div class="b" style="left:262.0px;top:1170.0px;width:2.0px;height:12.0px;background:#222"></div>
<div class="b" style="left:264.0px;top:1180.0px;width:10.0px;height:1.7px;background:#9a9a9a"></div>
<svg class="b" style="left:311.0px;top:1163.0px;" width="26" height="22" viewBox="0 0 26 22"><g fill="#1c1c1c"><path d="M2 0 L12.5 0 L14 2.1 L24 2.1 L25 3.5 L1 3.5 Z M0 5.5 L25.7 5.5 L25 21.5 L0.7 21.5Z"/></g></svg>
<div class="b" style="left:262.0px;top:1226.0px;width:2.0px;height:12.0px;background:#222"></div>
<div class="b" style="left:264.0px;top:1236.0px;width:10.0px;height:1.7px;background:#9a9a9a"></div>
<svg class="b" style="left:311.0px;top:1219.0px;" width="26" height="22" viewBox="0 0 26 22"><g fill="#1c1c1c"><path d="M2 0 L12.5 0 L14 2.1 L24 2.1 L25 3.5 L1 3.5 Z M0 5.5 L25.7 5.5 L25 21.5 L0.7 21.5Z"/></g></svg>
<div class="b" style="left:262.0px;top:1282.0px;width:2.0px;height:12.0px;background:#222"></div>
<div class="b" style="left:264.0px;top:1292.0px;width:10.0px;height:1.7px;background:#9a9a9a"></div>
<svg class="b" style="left:311.0px;top:1275.0px;" width="26" height="22" viewBox="0 0 26 22"><g fill="#1c1c1c"><path d="M2 0 L12.5 0 L14 2.1 L24 2.1 L25 3.5 L1 3.5 Z M0 5.5 L25.7 5.5 L25 21.5 L0.7 21.5Z"/></g></svg>
<div class="b" style="left:262.0px;top:1338.0px;width:2.0px;height:12.0px;background:#222"></div>
<div class="b" style="left:264.0px;top:1348.0px;width:10.0px;height:1.7px;background:#9a9a9a"></div>
<svg class="b" style="left:311.0px;top:1331.0px;" width="26" height="22" viewBox="0 0 26 22"><g fill="#1c1c1c"><path d="M2 0 L12.5 0 L14 2.1 L24 2.1 L25 3.5 L1 3.5 Z M0 5.5 L25.7 5.5 L25 21.5 L0.7 21.5Z"/></g></svg>
<div class="b" style="left:262.0px;top:1394.0px;width:2.0px;height:12.0px;background:#222"></div>
<div class="b" style="left:264.0px;top:1404.0px;width:10.0px;height:1.7px;background:#9a9a9a"></div>
<svg class="b" style="left:311.0px;top:1387.0px;" width="26" height="22" viewBox="0 0 26 22"><g fill="#1c1c1c"><path d="M2 0 L12.5 0 L14 2.1 L24 2.1 L25 3.5 L1 3.5 Z M0 5.5 L25.7 5.5 L25 21.5 L0.7 21.5Z"/></g></svg>
<div class="b" style="left:262.0px;top:1450.0px;width:2.0px;height:12.0px;background:#222"></div>
<div class="b" style="left:264.0px;top:1460.0px;width:10.0px;height:1.7px;background:#9a9a9a"></div>
<svg class="b" style="left:311.0px;top:1443.0px;" width="26" height="22" viewBox="0 0 26 22"><g fill="#1c1c1c"><path d="M2 0 L12.5 0 L14 2.1 L24 2.1 L25 3.5 L1 3.5 Z M0 5.5 L25.7 5.5 L25 21.5 L0.7 21.5Z"/></g></svg>
<div class="b" style="left:262.0px;top:1506.0px;width:2.0px;height:12.0px;background:#222"></div>
<div class="b" style="left:264.0px;top:1516.0px;width:10.0px;height:1.7px;background:#9a9a9a"></div>
<svg class="b" style="left:311.0px;top:1499.0px;" width="26" height="22" viewBox="0 0 26 22"><g fill="#1c1c1c"><path d="M2 0 L12.5 0 L14 2.1 L24 2.1 L25 3.5 L1 3.5 Z M0 5.5 L25.7 5.5 L25 21.5 L0.7 21.5Z"/></g></svg>
<div class="b" style="left:262.0px;top:1562.0px;width:2.0px;height:12.0px;background:#222"></div>
<div class="b" style="left:264.0px;top:1572.0px;width:10.0px;height:1.7px;background:#9a9a9a"></div>
<svg class="b" style="left:311.0px;top:1555.0px;" width="26" height="22" viewBox="0 0 26 22"><g fill="#1c1c1c"><path d="M2 0 L12.5 0 L14 2.1 L24 2.1 L25 3.5 L1 3.5 Z M0 5.5 L25.7 5.5 L25 21.5 L0.7 21.5Z"/></g></svg>
<div class="b" style="left:262.0px;top:1618.0px;width:2.0px;height:12.0px;background:#222"></div>
<div class="b" style="left:264.0px;top:1628.0px;width:10.0px;height:1.7px;background:#9a9a9a"></div>
<svg class="b" style="left:311.0px;top:1611.0px;" width="26" height="22" viewBox="0 0 26 22"><g fill="#1c1c1c"><path d="M2 0 L12.5 0 L14 2.1 L24 2.1 L25 3.5 L1 3.5 Z M0 5.5 L25.7 5.5 L25 21.5 L0.7 21.5Z"/></g></svg>
<div class="b" style="left:262.0px;top:1674.0px;width:2.0px;height:12.0px;background:#222"></div>
<div class="b" style="left:264.0px;top:1684.0px;width:10.0px;height:1.7px;background:#9a9a9a"></div>
<svg class="b" style="left:311.0px;top:1667.0px;" width="26" height="22" viewBox="0 0 26 22"><g fill="#1c1c1c"><path d="M2 0 L12.5 0 L14 2.1 L24 2.1 L25 3.5 L1 3.5 Z M0 5.5 L25.7 5.5 L25 21.5 L0.7 21.5Z"/></g></svg>
<div class="b" style="left:262.0px;top:1730.0px;width:2.0px;height:12.0px;background:#222"></div>
<div class="b" style="left:264.0px;top:1740.0px;width:10.0px;height:1.7px;background:#9a9a9a"></div>
<svg class="b" style="left:311.0px;top:1723.0px;" width="26" height="22" viewBox="0 0 26 22"><g fill="#1c1c1c"><path d="M2 0 L12.5 0 L14 2.1 L24 2.1 L25 3.5 L1 3.5 Z M0 5.5 L25.7 5.5 L25 21.5 L0.7 21.5Z"/></g></svg>
<div class="b" style="left:262.0px;top:1786.0px;width:2.0px;height:12.0px;background:#222"></div>
<div class="b" style="left:264.0px;top:1796.0px;width:10.0px;height:1.7px;background:#9a9a9a"></div>
<svg class="b" style="left:311.0px;top:1779.0px;" width="26" height="22" viewBox="0 0 26 22"><g fill="#1c1c1c"><path d="M2 0 L12.5 0 L14 2.1 L24 2.1 L25 3.5 L1 3.5 Z M0 5.5 L25.7 5.5 L25 21.5 L0.7 21.5Z"/></g></svg>
<svg class="b" style="left:880.0px;top:956.0px;" width="10" height="62" viewBox="0 0 10 62"><g fill="#c8c8c8"><rect x="0" y="0" width="4" height="4"/><rect x="6" y="0" width="4" height="4"/><rect x="0" y="8" width="4" height="4"/><rect x="6" y="8" width="4" height="4"/><rect x="0" y="16" width="4" height="4"/><rect x="6" y="16" width="4" height="4"/><rect x="0" y="24" width="4" height="4"/><rect x="6" y="24" width="4" height="4"/><rect x="0" y="32" width="4" height="4"/><rect x="6" y="32" width="4" height="4"/><rect x="0" y="40" width="4" height="4"/><rect x="6" y="40" width="4" height="4"/><rect x="0" y="48" width="4" height="4"/><rect x="6" y="48" width="4" height="4"/><rect x="0" y="56" width="4" height="4"/><rect x="6" y="56" width="4" height="4"/></g></svg>
<svg class="b" style="left:1019.0px;top:1785.0px;" width="22" height="15" viewBox="0 0 22 15"><path d="M3 3 L11 11 L19 3" fill="none" stroke="#1c1c1c" stroke-width="4.2"/></svg>
</body></html>
